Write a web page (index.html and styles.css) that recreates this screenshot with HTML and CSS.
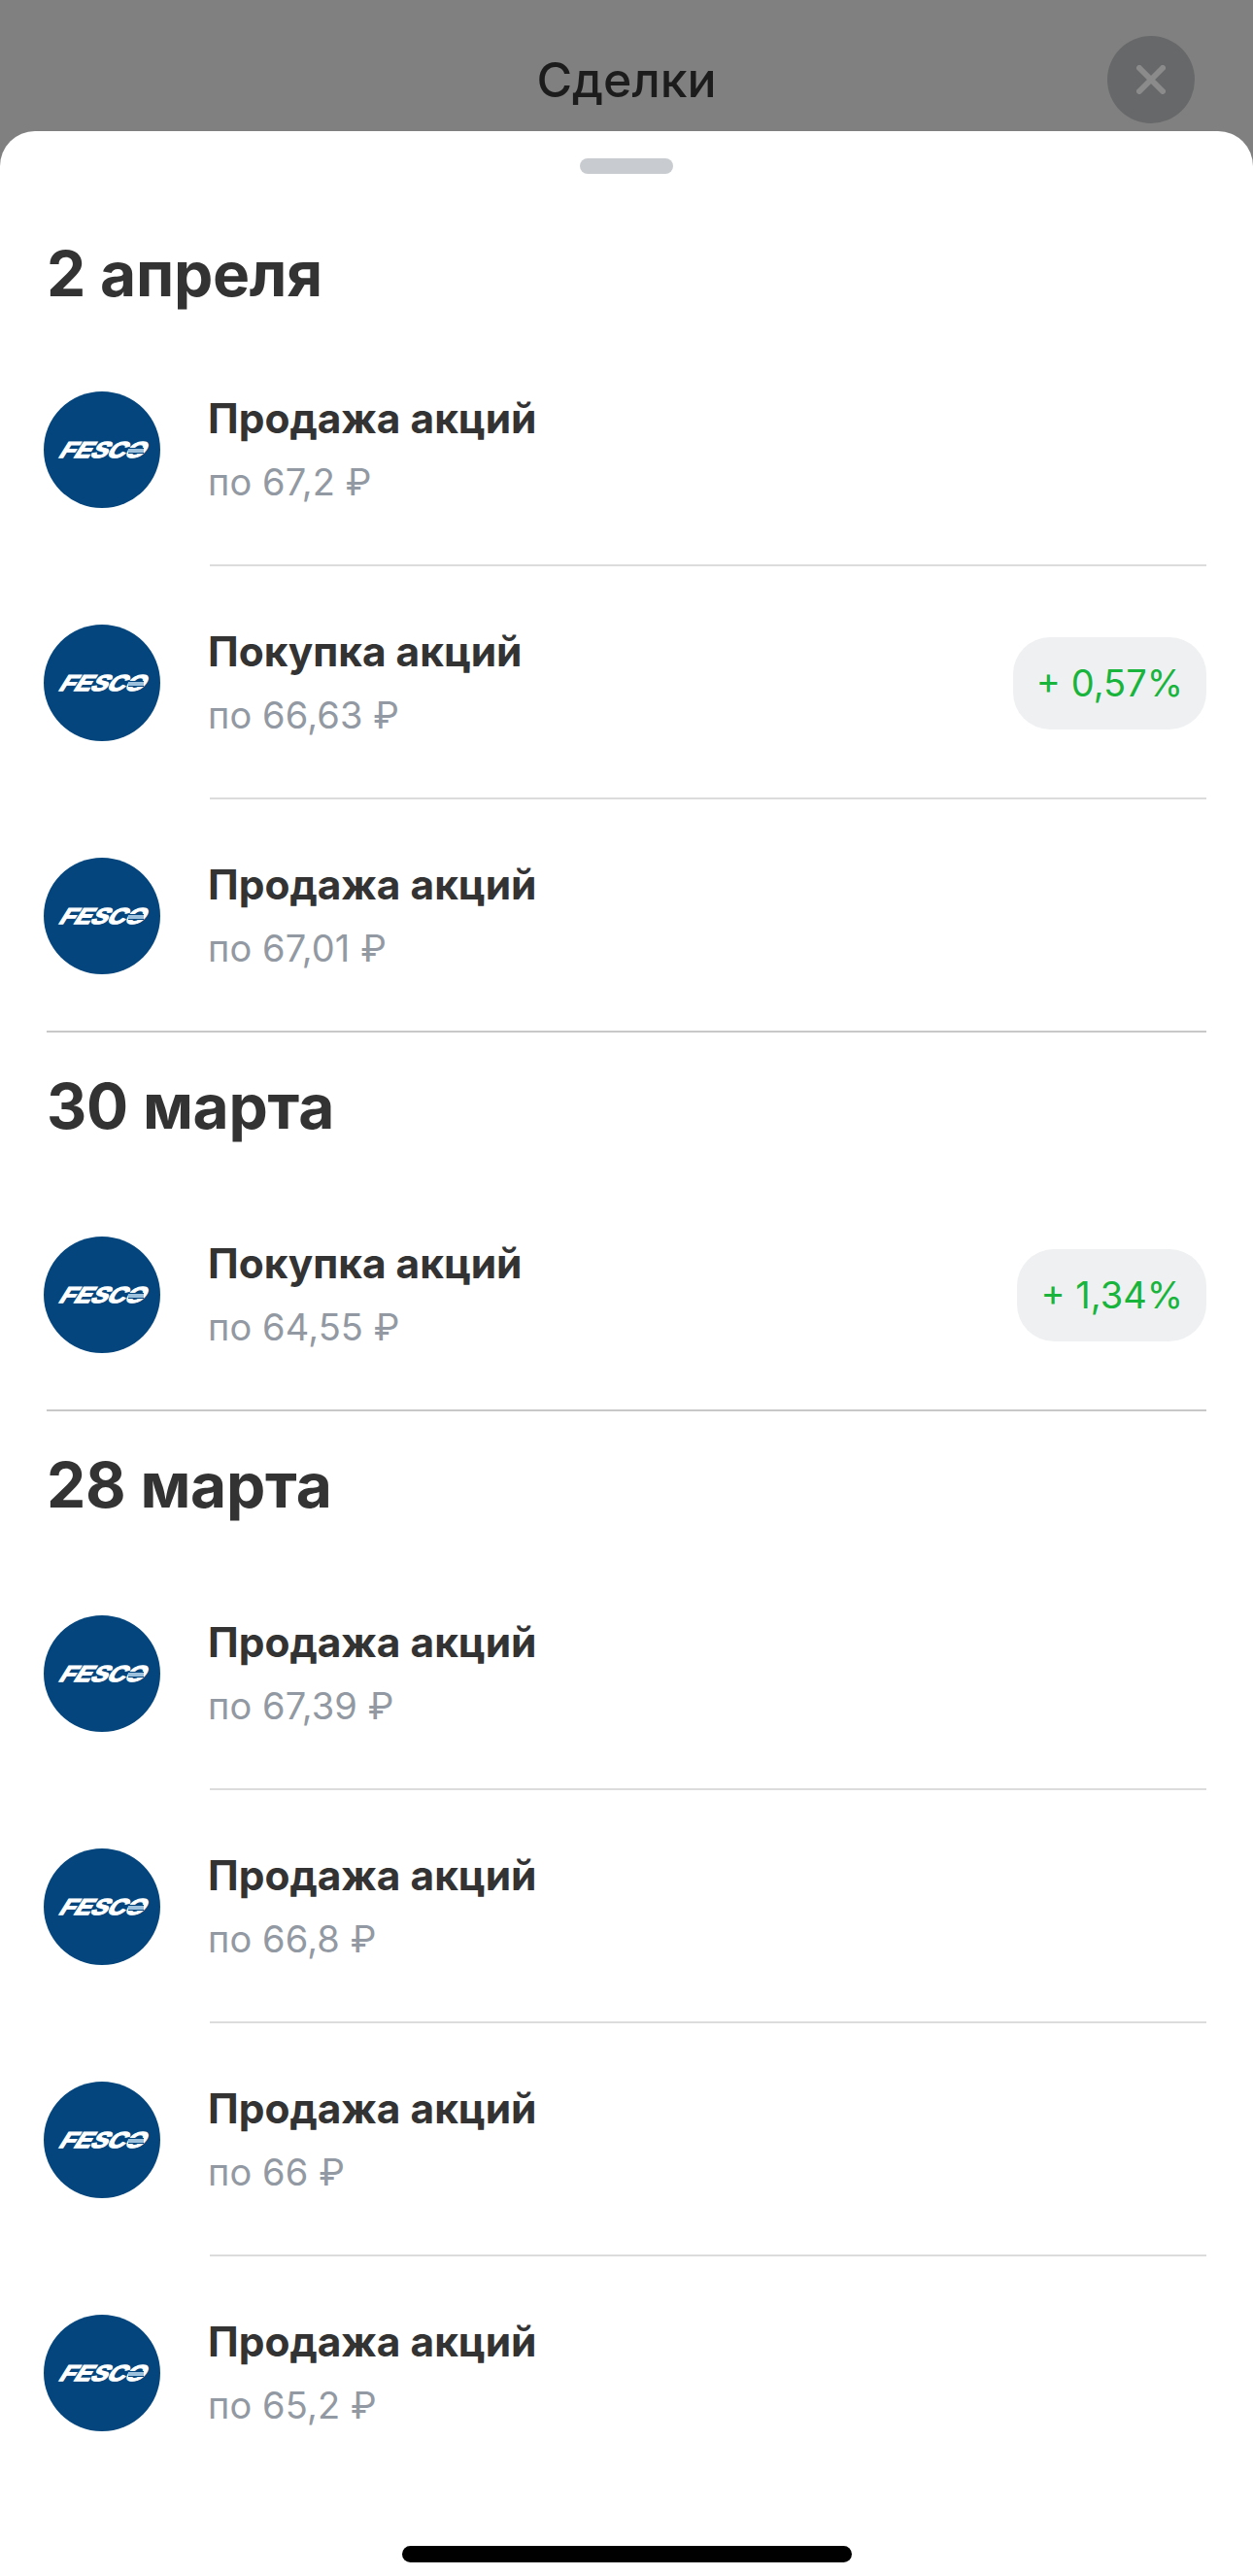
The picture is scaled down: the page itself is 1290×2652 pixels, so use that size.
FILE: index.html
```html
<!DOCTYPE html>
<html lang="ru">
<head>
<meta charset="utf-8">
<title>Сделки</title>
<link rel="stylesheet" href="styles.css">
</head>
<body>
<div class="screen">
  <header class="topbar">
    <h1 class="title">Сделки</h1>
    <button class="close" aria-label="Закрыть">
      <svg class="close-icon" viewBox="0 0 30 30"><path d="M3 3l24 24M27 3L3 27"/></svg>
    </button>
  </header>
  <main class="sheet">
    <div class="handle"></div>

    <section class="section section-first">
      <h2 class="date">2 апреля</h2>
      <div class="row">
        <div class="avatar"><span class="logo">FESCO</span></div>
        <div class="info"><div class="name">Продажа акций</div><div class="price">по 67,2 ₽</div></div>
      </div>
      <div class="sep"></div>
      <div class="row">
        <div class="avatar"><span class="logo">FESCO</span></div>
        <div class="info"><div class="name">Покупка акций</div><div class="price">по 66,63 ₽</div></div>
        <div class="pill">+ 0,57%</div>
      </div>
      <div class="sep"></div>
      <div class="row">
        <div class="avatar"><span class="logo">FESCO</span></div>
        <div class="info"><div class="name">Продажа акций</div><div class="price">по 67,01 ₽</div></div>
      </div>
    </section>

    <section class="section">
      <h2 class="date">30 марта</h2>
      <div class="row">
        <div class="avatar"><span class="logo">FESCO</span></div>
        <div class="info"><div class="name">Покупка акций</div><div class="price">по 64,55 ₽</div></div>
        <div class="pill">+ 1,34%</div>
      </div>
    </section>

    <section class="section section-last">
      <h2 class="date">28 марта</h2>
      <div class="row">
        <div class="avatar"><span class="logo">FESCO</span></div>
        <div class="info"><div class="name">Продажа акций</div><div class="price">по 67,39 ₽</div></div>
      </div>
      <div class="sep"></div>
      <div class="row">
        <div class="avatar"><span class="logo">FESCO</span></div>
        <div class="info"><div class="name">Продажа акций</div><div class="price">по 66,8 ₽</div></div>
      </div>
      <div class="sep"></div>
      <div class="row">
        <div class="avatar"><span class="logo">FESCO</span></div>
        <div class="info"><div class="name">Продажа акций</div><div class="price">по 66 ₽</div></div>
      </div>
      <div class="sep"></div>
      <div class="row">
        <div class="avatar"><span class="logo">FESCO</span></div>
        <div class="info"><div class="name">Продажа акций</div><div class="price">по 65,2 ₽</div></div>
      </div>
    </section>

    <div class="home-wrap"><div class="home"></div></div>
  </main>
</div>
</body>
</html>
```
FILE: styles.css
```css
* { box-sizing: border-box; }
html, body { margin: 0; padding: 0; }
body {
  background: #808080;
  font-family: Inter, "Noto Sans", sans-serif;
  height: 2652px;
  overflow: hidden;
}
.screen { display: flex; flex-direction: column; height: 2652px; }
.topbar {
  height: 135px;
  flex: none;
  display: flex;
  align-items: center;
  justify-content: center;
  position: relative;
}
.title {
  margin: 0 0 -29px;
  font-size: 50px;
  font-weight: 500;
  color: #1c1c1c;
  line-height: 58px;
}
.close {
  position: absolute;
  left: 1140px;
  top: 37px;
  width: 90px;
  height: 90px;
  padding: 0;
  border: 0;
  border-radius: 50%;
  background: #676869;
  display: flex;
  align-items: center;
  justify-content: center;
}
.close-icon { width: 30px; height: 30px; }
.close-icon path { stroke: #8b8b8b; stroke-width: 6; stroke-linecap: round; fill: none; }
.sheet {
  flex: 1;
  background: #fff;
  border-radius: 36px 36px 0 0;
  display: flex;
  flex-direction: column;
}
.handle {
  width: 96px;
  height: 16px;
  border-radius: 8px;
  background: #c8cbcf;
  margin: 28px auto 0;
  flex: none;
}
.section { border-bottom: 2px solid #c8c8c8; margin: 0 48px; }
.section-last { border-bottom: 0; }
.section-first .date { height: 166px; padding-top: 70px; }
.date {
  margin: 0;
  height: 152px;
  padding-top: 43px;
  font-size: 64px;
  line-height: 66px;
  font-weight: 700;
  letter-spacing: -0.25px;
  color: #333;
}
.row {
  height: 236px;
  margin-left: -3px;
  display: flex;
  align-items: center;
}
.avatar {
  width: 120px;
  height: 120px;
  flex: none;
  border-radius: 50%;
  background: #03457c;
  display: flex;
  align-items: center;
  justify-content: center;
  position: relative;
  overflow: hidden;
}
.logo {
  font-family: "Liberation Sans", sans-serif;
  font-weight: 700;
  font-size: 23px;
  line-height: 23px;
  color: #fff;
  -webkit-text-stroke: 1.3px #fff;
  transform: translateX(3px) skewX(-32deg) scaleX(1.1);
}
.avatar::after {
  content: "";
  position: absolute;
  left: 87px;
  top: 58px;
  width: 16px;
  height: 4px;
  border-top: 1px solid #03457c;
  border-bottom: 1px solid #03457c;
  background: #9dc0dc;
}
.info { flex: 1; margin-left: 49px; }
.name {
  font-size: 42.4px;
  line-height: 50px;
  font-weight: 700;
  color: #333;
}
.price {
  font-size: 38px;
  line-height: 48px;
  margin-top: 16px;
  letter-spacing: 0.1px;
  color: #9299a2;
}
.pill {
  height: 95px;
  border-radius: 38px;
  background: #eff0f2;
  color: #18b43c;
  font-size: 38px;
  line-height: 95px;
  padding: 0 24px;
  flex: none;
}
.sep { height: 2px; background: #dcdcdc; margin: 0 0 2px 168px; }
.home-wrap { flex: 1; position: relative; }
.home {
  position: absolute;
  left: 414px;
  bottom: 14px;
  width: 463px;
  height: 17px;
  border-radius: 9px;
  background: #000;
}
```
